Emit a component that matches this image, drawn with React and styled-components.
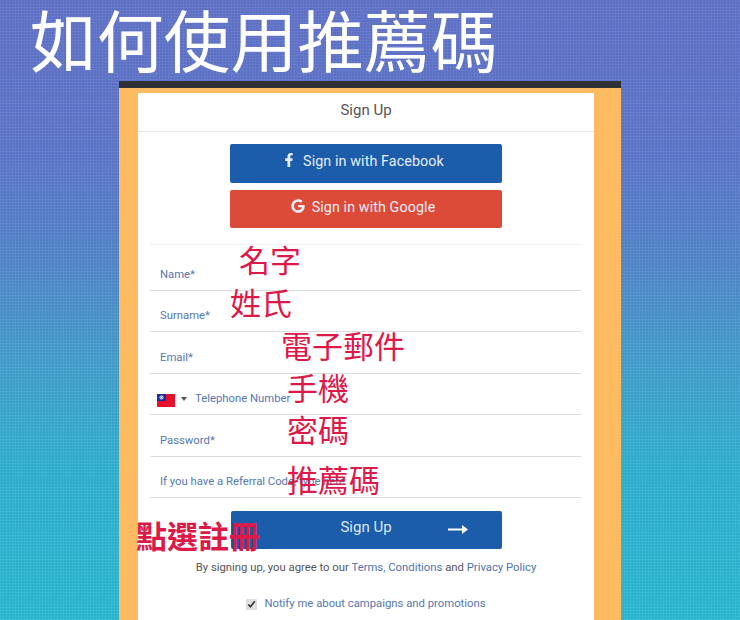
import React from "react";
import styled, { createGlobalStyle } from "styled-components";
import { FaFacebookF, FaGoogle } from "react-icons/fa";

const GlobalStyle = createGlobalStyle`
  html, body {
    margin: 0;
    padding: 0;
  }
  body {
    font-family: "Roboto", "Liberation Sans", sans-serif;
  }
`;

const Page = styled.div`
  width: 740px;
  height: 620px;
  overflow: hidden;
  background:
    repeating-linear-gradient(0deg, rgba(255, 255, 255, 0.035) 0 1px, rgba(0, 0, 0, 0.025) 1px 3px),
    repeating-linear-gradient(90deg, rgba(255, 255, 255, 0.03) 0 1px, rgba(0, 0, 0, 0.02) 1px 3px),
    linear-gradient(180deg, #6274cb 0%, #5f78cd 25%, #5488cd 42%, #45a0cf 58%, #33b2d4 75%, #2cbbd4 100%);
`;

const Title = styled.h1`
  margin: 0;
  height: 81px;
  padding-left: 30px;
  font-family: "Noto Sans CJK TC", sans-serif;
  font-size: 66.8px;
  font-weight: 400;
  line-height: 76px;
  color: #fff;
  white-space: nowrap;
`;

const Panel = styled.div`
  width: 502px;
  height: 539px;
  margin: 0 auto;
  box-sizing: border-box;
  padding: 5px 27px 0 19px;
  background: #ffbb62;
  border-top: 7px solid #2e3033;
`;

const Card = styled.div`
  position: relative;
  height: 100%;
  background: #fff;
  color: #555;
`;

const CardHeader = styled.div`
  height: 38px;
  display: flex;
  align-items: flex-start;
  justify-content: center;
  border-bottom: 1px solid #e6e6e6;
  font-size: 15px;
  line-height: 34px;
  color: #555;
`;

const Socials = styled.div`
  display: flex;
  flex-direction: column;
  align-items: center;
  gap: 7px;
  padding: 12px 0 16px 0;
  margin: 0 13px 0 12px;
  border-bottom: 1px solid #f0f0f0;
`;

const SocialButton = styled.div`
  box-sizing: border-box;
  width: 272px;
  height: ${(p) => p.$height}px;
  display: flex;
  align-items: flex-start;
  justify-content: center;
  gap: 7px;
  padding: 7px 5px 0 0;
  border-radius: 2px;
  background: ${(p) => p.$color};
  color: #e8eef8;
  font-size: 14.3px;
  letter-spacing: 0.1px;
  line-height: 20px;
  svg {
    margin-top: 2px;
    font-size: 14px;
  }
`;

const Form = styled.div`
  margin: 0 13px 0 12px;
`;

const Row = styled.div`
  position: relative;
  box-sizing: border-box;
  height: ${(p) => p.$height || 41.4}px;
  display: flex;
  align-items: flex-end;
  gap: 6px;
  padding: 0 0 7px ${(p) => p.$indent || 10}px;
  border-bottom: 1px solid #dcdcdc;
  color: #5678ad;
  font-size: 11.3px;
  line-height: 16px;
`;

const Caret = styled.span`
  width: 0;
  height: 0;
  margin: 0 2px 6px 0;
  border-left: 3px solid transparent;
  border-right: 3px solid transparent;
  border-top: 4px solid #555;
`;

const Note = styled.span`
  position: absolute;
  left: ${(p) => p.$left}px;
  top: ${(p) => p.$top}px;
  font-family: "Noto Sans CJK TC", sans-serif;
  font-size: 31px;
  font-weight: ${(p) => p.$weight || 400};
  line-height: 1.2;
  color: #dc1a4a;
  white-space: nowrap;
`;

const SubmitButton = styled.div`
  box-sizing: border-box;
  position: relative;
  width: 271px;
  height: 38px;
  margin: 13px auto 0;
  display: flex;
  align-items: flex-start;
  justify-content: center;
  padding-top: 5px;
  border-radius: 2px;
  background: #1b5cab;
  color: #dfe8f5;
  font-size: 15px;
  line-height: 22px;
`;

const ArrowIcon = styled.svg`
  position: absolute;
  right: 34px;
  top: 13px;
`;

const Terms = styled.p`
  margin: 11px 0 0;
  font-size: 11.3px;
  line-height: 16px;
  text-align: center;
  color: #555;
  white-space: nowrap;
`;

const Link = styled.span`
  color: #4f74ab;
`;

const Notify = styled.label`
  display: flex;
  align-items: center;
  justify-content: center;
  gap: 7px;
  margin-top: 20px;
  font-size: 11.3px;
  line-height: 16px;
  color: #5678ad;
  white-space: nowrap;
`;

const Check = styled.input`
  width: 11px;
  height: 11px;
  margin: 2px 0 0 0;
  accent-color: #e0e0e0;
`;

const TaiwanFlag = () => (
  <svg width="18" height="13" viewBox="0 0 18 13">
    <rect width="18" height="13" fill="#e8112d" />
    <rect width="9" height="7" fill="#1a2f9c" />
    <circle cx="4.5" cy="3.5" r="2" fill="#fff" />
    <circle cx="4.5" cy="3.5" r="1.2" fill="#1a2f9c" />
    <circle cx="4.5" cy="3.5" r="0.9" fill="#fff" />
  </svg>
);

const App = () => (
  <Page>
    <GlobalStyle />
    <Title>如何使用推薦碼</Title>
    <Panel>
      <Card>
        <CardHeader>Sign Up</CardHeader>
        <Socials>
          <SocialButton $color="#1b5cab" $height={39}>
            <FaFacebookF />
            Sign in with Facebook
          </SocialButton>
          <SocialButton $color="#dc4b37" $height={38}>
            <FaGoogle />
            Sign in with Google
          </SocialButton>
        </Socials>
        <Form>
          <Row $height={46}>
            Name*
            <Note $left={89} $top={-5}>名字</Note>
          </Row>
          <Row>
            Surname*
            <Note $left={80} $top={-8}>姓氏</Note>
          </Row>
          <Row>
            Email*
            <Note $left={131} $top={-6}>電子郵件</Note>
          </Row>
          <Row $indent={7}>
            <TaiwanFlag />
            <Caret />
            Telephone Number
            <Note $left={137} $top={-6}>手機</Note>
          </Row>
          <Row>
            Password*
            <Note $left={137} $top={-5}>密碼</Note>
          </Row>
          <Row>
            If you have a Referral Code, type here
            <Note $left={137} $top={3}>推薦碼</Note>
          </Row>
        </Form>
        <SubmitButton>
          Sign Up
          <ArrowIcon width="20" height="11" viewBox="0 0 20 11">
            <path d="M0 5.5h16" stroke="#fff" strokeWidth="2" />
            <path d="M14 1l6 4.5-6 4.5z" fill="#fff" />
          </ArrowIcon>
        </SubmitButton>
        <Note $left={-2} $top={423} $weight={700}>點選註冊</Note>
        <Terms>
          By signing up, you agree to our <Link>Terms, Conditions</Link> and <Link>Privacy Policy</Link>
        </Terms>
        <Notify>
          <Check type="checkbox" defaultChecked readOnly />
          Notify me about campaigns and promotions
        </Notify>
      </Card>
    </Panel>
  </Page>
);

export default App;
